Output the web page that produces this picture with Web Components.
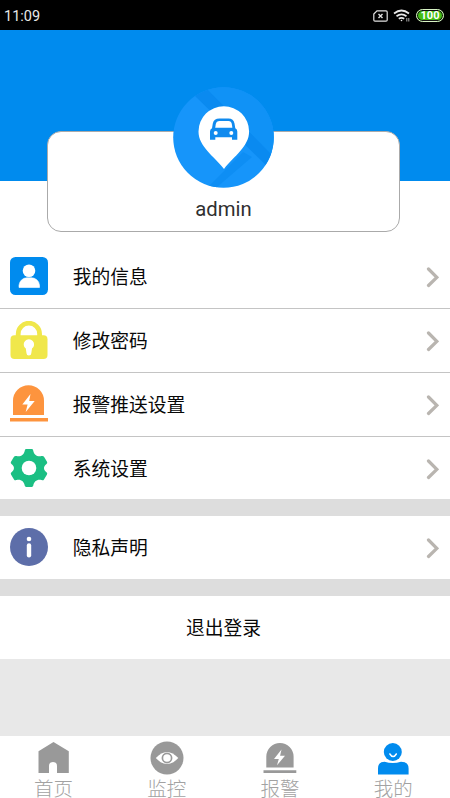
<!DOCTYPE html>
<html lang="zh-CN">
<head>
<meta charset="utf-8">
<title>我的</title>
<style>
html,body{margin:0;height:100%;overflow:hidden;background:#fff;font-family:Roboto,"Noto Sans CJK SC",sans-serif}
</style>
</head>
<body>
<profile-page></profile-page>
<script>
const ICONS = {
  user: `<rect x="0" y="0" width="38" height="38" rx="5.5" fill="#008bee"/><circle cx="19" cy="13.7" r="6.3" fill="#fff"/><path d="M9 30.5v-2.3a8 8 0 0 1 8-7.4h4a8 8 0 0 1 8.500 7.400v2.300z" fill="#fff" stroke="#fff" stroke-width=".6" stroke-linejoin="round"/>`,
  lock: `<path d="M8.200 17v-4.100a10.700 10.700 0 0 1 21.400 0V17" fill="none" stroke="#f0e74b" stroke-width="4.800"/><rect x=".5" y="14.300" width="37" height="23.700" rx="4" fill="#f0e74b"/><path d="M15.800 27.600a5.200 5.200 0 1 1 6.200 0l-.7 4.600a2.300 2.300 0 0 1-4.800 0z" fill="#fff"/>`,
  alarm: `<path d="M3 30V15.800a15.500 15.500 0 0 1 31 0V30z" fill="#fd943e"/><path d="M0 32.900h38v3.700H0z" fill="#fd943e"/><path d="M20.500 9 12.300 19.400h5.300l-1.900 7.600 9-11h-5.500z" fill="#fff"/>`,
  gear: `<path d="M14.800 1.400Q15 0 16.300 0h5.400q1.300 0 1.500 1.400c.7 4.200 4 6.600 8.200 5.700q1.800-.5 2.600.7l3 5q.8 1.400-.5 2.300c-3.300 2.300-3.300 5.800 0 8.100q1.200.9.500 2.200l-3 5q-.8 1.200-2.500.7c-4.300-1.100-7.600 1.400-8.200 5.500q-.2 1.400-1.600 1.400h-5.400q-1.400 0-1.600-1.400c-.6-4.100-3.900-6.600-8.200-5.500q-1.700.5-2.500-.7l-3-5q-.7-1.300.5-2.200c3.300-2.300 3.300-5.800 0-8.100Q.2 14.200 1 12.800l3-5q.8-1.200 2.600-.7c4.200.9 7.500-1.500 8.200-5.700z" fill="#1bbf83"/><circle cx="19" cy="19" r="7.300" fill="#fff"/>`,
  info: `<circle cx="19" cy="19" r="19" fill="#5d6ea9"/><circle cx="19" cy="11" r="2.300" fill="#fff"/><path d="M19 17.500v9.700" stroke="#fff" stroke-width="4.400" stroke-linecap="round"/>`,
  home: `<path d="M3.500 11.200 18.500 2l15.300 9.200V33H22V26a4 4 0 0 0-8 0v7H3.500z"/>`,
  eye: `<circle cx="19" cy="18" r="16.500"/><path d="M7.800 18Q19 5.800 30.300 18 19 30.200 7.800 18z" fill="#fff"/><circle cx="19" cy="18" r="4.600" fill="#fff" stroke="currentColor" stroke-width="1.700"/>`,
  bell: `<path d="M5.300 27.500V16.600a13.650 13.650 0 0 1 27.300 0v10.900zM2.500 30.200h32.800v2.700H2.500z"/><path d="m20.500 9.500-7.500 9.400h4.800l-1.800 6.400 8-9.600h-4.900z" fill="#fff"/>`,
  me: `<circle cx="18.800" cy="12" r="9"/><path d="M4 34.500V28.500q0-6.800 6.600-6.800Q18.800 24.500 27 21.700q7.600 0 7.600 6.800v6z"/><path d="M15.900 14q3.200 5.200 6.400 0" fill="none" stroke="#fff" stroke-width="1.500" stroke-linecap="round"/>`
};
function define(name, render){
  customElements.define(name, class extends HTMLElement{
    connectedCallback(){ this.attachShadow({mode:'open'}).innerHTML = render(this); }
  });
}
define('app-icon', el => `<style>:host{display:block;width:38px;height:38px;flex:none}svg{display:block;width:100%;height:100%;fill:currentColor}</style><svg viewBox="0 0 38 38">${ICONS[el.getAttribute('name')]}</svg>`);

define('status-bar', () => `<style>
:host{display:flex;box-sizing:border-box;height:30px;padding:2px 6px 0 4px;background:#000;color:#e8e8e8;align-items:center;justify-content:space-between;font-size:14.500px}
.right{display:flex;align-items:center;gap:5px;margin-top:-1px}svg{display:block}
.battery{box-sizing:border-box;width:28px;height:13px;border:1.500px solid #d8f3c5;border-radius:7px;background:#43bd13;box-shadow:inset 0 0 0 1px #111;color:#fff;font:bold 11px/11px Roboto,sans-serif;text-align:center}
</style><span>11:09</span><div class="right">
<svg width="15" height="12" fill="none" stroke="#e2e2e2" stroke-width="1.200"><path d="M4 .8h9q1.200 0 1.200 1.200v8q0 1.200-1.200 1.200H2Q.8 11.200.8 10V4z"/><path d="m5.500 4 4 4m0-4-4 4" stroke-width="1.400"/></svg>
<svg width="18" height="13" fill="none" stroke="#e8e8e8" stroke-width="1.700"><path d="M1 4.500q7.500-6 15 0M3.500 7.300q5-3.800 10 0M5.800 9.800q2.700-2 5.400 0"/><circle cx="8.500" cy="11.500" r=".8" fill="#e8e8e8" stroke="none"/><path d="M13.800 9v3.500M15.800 9v3.500" stroke-width="1" stroke="#aaa"/></svg>
<div class="battery">100</div></div>`);

define('profile-header', () => `<style>
:host{display:block;box-sizing:border-box;height:215px;padding:101px 50px 0 47px;background:linear-gradient(#008bee 151.500px,#fff 151.500px)}
.card{position:relative;box-sizing:border-box;height:101px;border:1.500px solid #aaa;border-radius:14px;background:#fff;display:flex;align-items:flex-end;justify-content:center;color:#303030;font-size:20.300px;line-height:24px;padding-bottom:10.500px}
svg{position:absolute;left:125px;top:-45px}
</style><div class="card"><svg width="101" height="101" viewBox="0 0 101 101">
<defs><clipPath id="c"><circle cx="50.500" cy="50.500" r="50.300"/></clipPath></defs>
<g clip-path="url(#c)"><path fill="#1695fa" d="M0 0h101v101H0z"/><path fill="#1092f6" d="M32 0h69v72z"/><path d="m22 9 10-9 69 70v16z" fill="#0a8af0"/><path d="M34 101 70 65l9 5-36 31z" fill="#0e8ef4"/></g>
<path d="M51 82C41 69 25.500 59.500 25.500 44.500a25.300 25.300 0 0 1 50.600 0C76.100 59.500 61 69 51 82z" fill="#fff"/>
<path d="M46.500 31.500h9q5 0 6 5l.8 4.700q2 .8 2 3.300v8.200h-5.300v-2.400H42.300v2.400H37v-8.200q0-2.500 2-3.300l.8-4.700q1-5 6.700-5z" fill="#108aee"/>
<path d="M46.500 34h9q2.800 0 3.300 3l.6 3.700H42.200l.6-3.700q.6-3 3.700-3z" fill="#fff"/><circle cx="42.700" cy="46" r="2" fill="#fff"/><circle cx="58.300" cy="46" r="2" fill="#fff"/>
</svg><span>admin</span></div>`);

define('menu-row', el => `<style>
:host{display:flex;box-sizing:border-box;height:64px;padding:0 11px 0 9.500px;align-items:center;background:#fff;border-bottom:1.500px solid #c4c4c4;color:#080808;font-size:18.750px;line-height:28px}
:host([last]){height:63px;border:0;padding-top:1px}
:host([icon=gear]){height:62px;padding-top:2px}
app-icon{margin:0 0 1.500px}
.label{flex:1;margin-left:25.200px;padding-top:2px}svg{display:block}
</style><app-icon name="${el.getAttribute('icon')}"></app-icon><span class="label"><slot></slot></span><svg width="13" height="22" fill="none" stroke="#b9b5b0" stroke-width="3.200" stroke-linecap="round"><path d="m2.500 3 8.300 8.300-8.300 8.200"/></svg>`);

define('action-row', () => `<style>:host{display:flex;box-sizing:border-box;height:63px;align-items:center;justify-content:center;background:#fff;color:#080808;font-size:18.750px;line-height:28px;padding:3px 3px 0 0}</style><slot></slot>`);
define('tab-item', el => `<style>
:host{display:flex;flex-direction:column;align-items:center;flex:none;width:113.200px;color:#999;font-size:19.500px;line-height:18px;padding-top:4px;box-sizing:border-box}
:host([active]) app-icon{color:#008bee}span{margin-top:3px;color:#a2a2a2;font-weight:300}
</style><app-icon name="${el.getAttribute('icon')}"></app-icon><span><slot></slot></span>`);
define('tab-bar', () => `<style>:host{display:flex;height:62px;background:#fff;margin-left:-3px}</style><slot></slot>`);
define('profile-page', () => `<style>
:host{display:flex;flex-direction:column;height:798px;width:450px;overflow:hidden;background:#fff}
status-bar,profile-header,menu-row,action-row,tab-bar{flex:none}
.gap{height:17px;background:#ddd;flex:none}.fill{flex:1;background:#e8e8e8}
</style><status-bar></status-bar><profile-header></profile-header>
<menu-row icon="user">我的信息</menu-row><menu-row icon="lock">修改密码</menu-row><menu-row icon="alarm">报警推送设置</menu-row><menu-row icon="gear" last>系统设置</menu-row>
<div class="gap"></div><menu-row icon="info" last>隐私声明</menu-row><div class="gap"></div>
<action-row>退出登录</action-row><div class="fill"></div>
<tab-bar><tab-item icon="home">首页</tab-item><tab-item icon="eye">监控</tab-item><tab-item icon="bell">报警</tab-item><tab-item icon="me" active>我的</tab-item></tab-bar>`);
</script>
</body>
</html>
